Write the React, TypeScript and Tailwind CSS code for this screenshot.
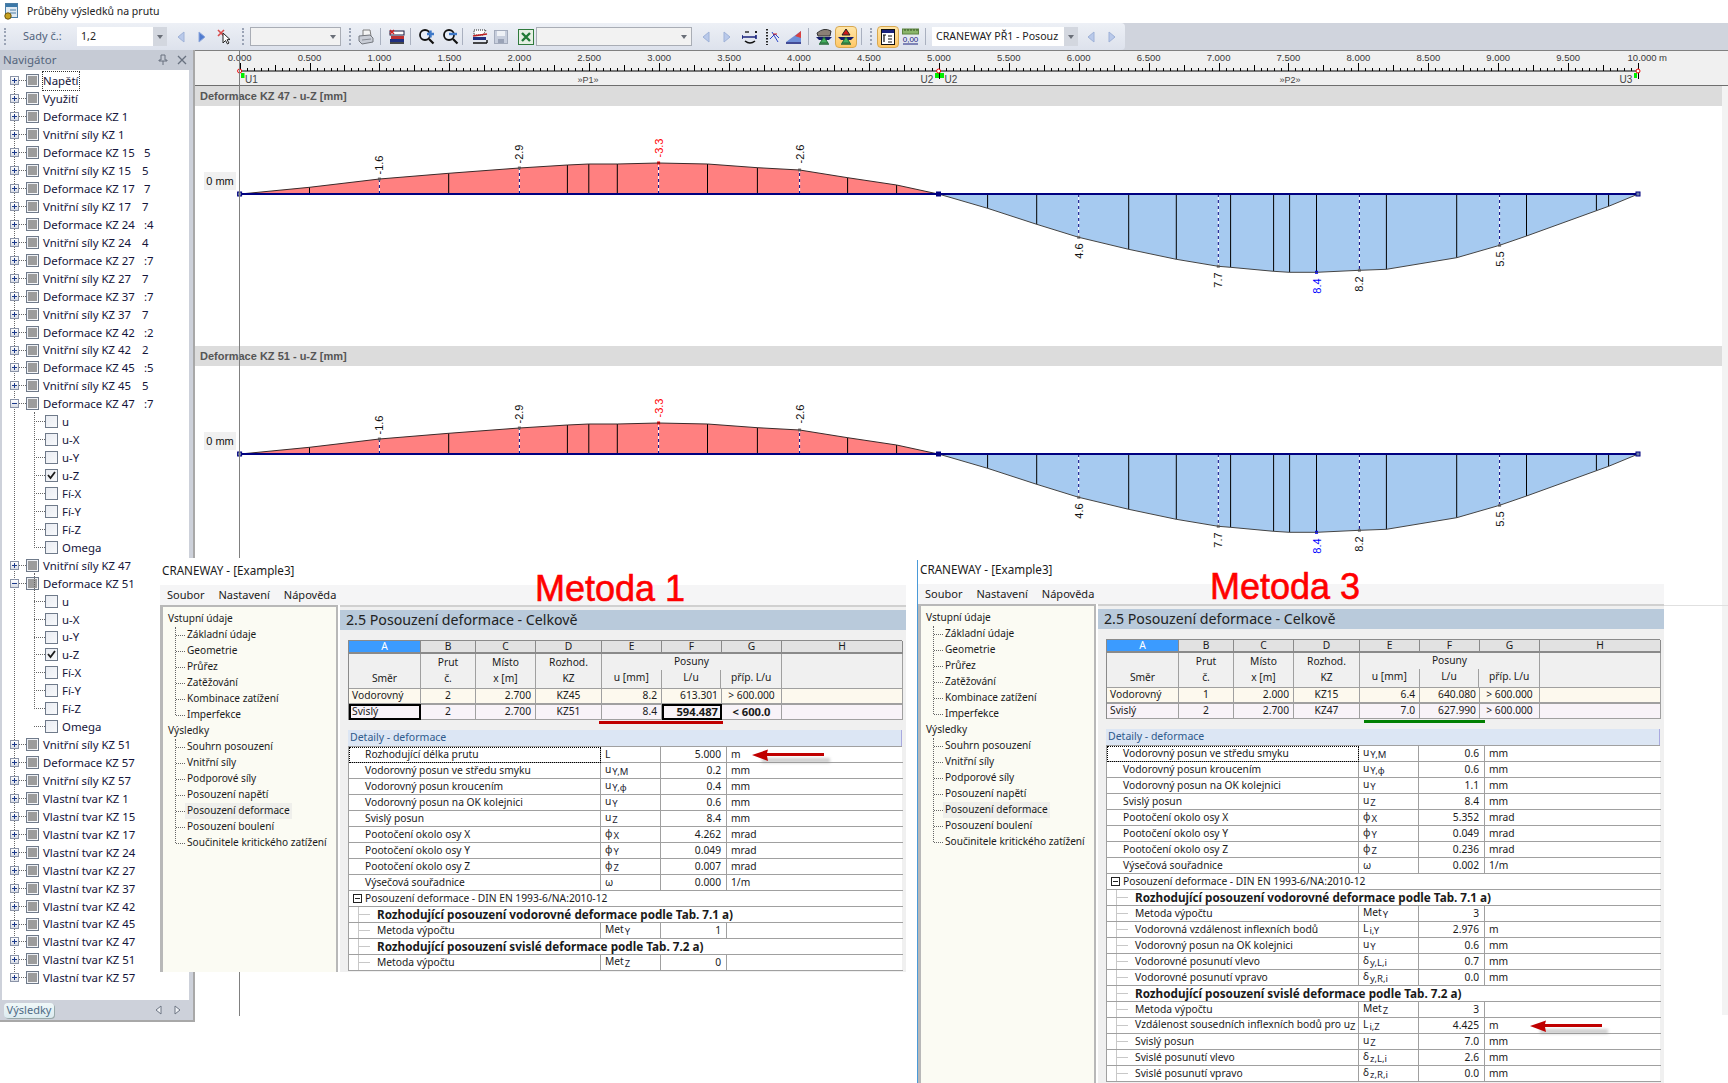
import { ReactNode } from 'react'

type TreeRow = { label: string; tail?: string; open?: boolean; child?: boolean; checked?: boolean; focus?: boolean }
type Detail = { kind: 'row' | 'group' | 'bold' | 'child'; name: string; sym?: string; sub?: string; val?: string; unit?: string }

const defTails = ['', '5', '7', ':4', ':7', ':7', ':2', ':5']
const vsTails = ['', '5', '7', '4', '7', '7', '2', '5']
const kzList = ['1', '15', '17', '24', '27', '37', '42', '45']
const childNames = ['u', 'u-X', 'u-Y', 'u-Z', 'Fí-X', 'Fí-Y', 'Fí-Z', 'Omega']

const children = (): TreeRow[] => childNames.map((n) => ({ label: n, child: true, checked: n === 'u-Z' }))

const treeRows: TreeRow[] = [
  { label: 'Napětí', focus: true },
  { label: 'Využití' },
  ...kzList.flatMap((k, i) => [
    { label: `Deformace KZ ${k}`, tail: defTails[i] },
    { label: `Vnitřní síly KZ ${k}`, tail: vsTails[i] },
  ]),
  { label: 'Deformace KZ 47', tail: ':7', open: true },
  ...children(),
  { label: 'Vnitřní síly KZ 47' },
  { label: 'Deformace KZ 51', open: true },
  ...children(),
  { label: 'Vnitřní síly KZ 51' },
  { label: 'Deformace KZ 57' },
  { label: 'Vnitřní síly KZ 57' },
  ...['1', '15', '17', '24', '27', '37', '42', '45', '47', '51', '57'].map((k) => ({ label: `Vlastní tvar KZ ${k}` })),
]

const details1: Detail[] = [
  { kind: 'row', name: 'Rozhodující délka prutu', sym: 'L', val: '5.000', unit: 'm' },
  { kind: 'row', name: 'Vodorovný posun ve středu smyku', sym: 'u', sub: 'Y,M', val: '0.2', unit: 'mm' },
  { kind: 'row', name: 'Vodorovný posun kroucením', sym: 'u', sub: 'Y,φ', val: '0.4', unit: 'mm' },
  { kind: 'row', name: 'Vodorovný posun na OK kolejnici', sym: 'u', sub: 'Y', val: '0.6', unit: 'mm' },
  { kind: 'row', name: 'Svislý posun', sym: 'u', sub: 'Z', val: '8.4', unit: 'mm' },
  { kind: 'row', name: 'Pootočení okolo osy X', sym: 'φ', sub: 'X', val: '4.262', unit: 'mrad' },
  { kind: 'row', name: 'Pootočení okolo osy Y', sym: 'φ', sub: 'Y', val: '0.049', unit: 'mrad' },
  { kind: 'row', name: 'Pootočení okolo osy Z', sym: 'φ', sub: 'Z', val: '0.007', unit: 'mrad' },
  { kind: 'row', name: 'Výsečová souřadnice', sym: 'ω', val: '0.000', unit: '1/m' },
  { kind: 'group', name: 'Posouzení deformace - DIN EN 1993-6/NA:2010-12' },
  { kind: 'bold', name: 'Rozhodující posouzení vodorovné deformace podle Tab. 7.1 a)' },
  { kind: 'child', name: 'Metoda výpočtu', sym: 'Met', sub: 'Y', val: '1' },
  { kind: 'bold', name: 'Rozhodující posouzení svislé deformace podle Tab. 7.2 a)' },
  { kind: 'child', name: 'Metoda výpočtu', sym: 'Met', sub: 'Z', val: '0' },
]

const details3: Detail[] = [
  { kind: 'row', name: 'Vodorovný posun ve středu smyku', sym: 'u', sub: 'Y,M', val: '0.6', unit: 'mm' },
  { kind: 'row', name: 'Vodorovný posun kroucením', sym: 'u', sub: 'Y,φ', val: '0.6', unit: 'mm' },
  { kind: 'row', name: 'Vodorovný posun na OK kolejnici', sym: 'u', sub: 'Y', val: '1.1', unit: 'mm' },
  { kind: 'row', name: 'Svislý posun', sym: 'u', sub: 'Z', val: '8.4', unit: 'mm' },
  { kind: 'row', name: 'Pootočení okolo osy X', sym: 'φ', sub: 'X', val: '5.352', unit: 'mrad' },
  { kind: 'row', name: 'Pootočení okolo osy Y', sym: 'φ', sub: 'Y', val: '0.049', unit: 'mrad' },
  { kind: 'row', name: 'Pootočení okolo osy Z', sym: 'φ', sub: 'Z', val: '0.236', unit: 'mrad' },
  { kind: 'row', name: 'Výsečová souřadnice', sym: 'ω', val: '0.002', unit: '1/m' },
  { kind: 'group', name: 'Posouzení deformace - DIN EN 1993-6/NA:2010-12' },
  { kind: 'bold', name: 'Rozhodující posouzení vodorovné deformace podle Tab. 7.1 a)' },
  { kind: 'child', name: 'Metoda výpočtu', sym: 'Met', sub: 'Y', val: '3' },
  { kind: 'child', name: 'Vodorovná vzdálenost inflexních bodů', sym: 'L', sub: 'i,Y', val: '2.976', unit: 'm' },
  { kind: 'child', name: 'Vodorovný posun na OK kolejnici', sym: 'u', sub: 'Y', val: '0.6', unit: 'mm' },
  { kind: 'child', name: 'Vodorovné posunutí vlevo', sym: 'δ', sub: 'y,L,i', val: '0.7', unit: 'mm' },
  { kind: 'child', name: 'Vodorovné posunutí vpravo', sym: 'δ', sub: 'y,R,i', val: '0.0', unit: 'mm' },
  { kind: 'bold', name: 'Rozhodující posouzení svislé deformace podle Tab. 7.2 a)' },
  { kind: 'child', name: 'Metoda výpočtu', sym: 'Met', sub: 'Z', val: '3' },
  { kind: 'child', name: 'Vzdálenost sousedních inflexních bodů pro uZ', sym: 'L', sub: 'i,Z', val: '4.425', unit: 'm' },
  { kind: 'child', name: 'Svislý posun', sym: 'u', sub: 'Z', val: '7.0', unit: 'mm' },
  { kind: 'child', name: 'Svislé posunutí vlevo', sym: 'δ', sub: 'z,L,i', val: '2.6', unit: 'mm' },
  { kind: 'child', name: 'Svislé posunutí vpravo', sym: 'δ', sub: 'z,R,i', val: '0.0', unit: 'mm' },
]

const redPts = [[239.6, 194], [251, 193], [309.5, 187.3], [379.4, 179], [448.7, 173.3], [519.4, 168], [567.4, 165], [588.8, 164], [617.3, 164], [658.6, 163], [707.5, 164], [757.4, 167.7], [799.6, 170], [847.6, 177.7], [896.6, 185], [932, 192.7], [938.5, 194]]
const bluePts = [[938.5, 194], [987.6, 208.3], [1036.7, 224.3], [1078.7, 237.3], [1128.7, 249.3], [1176.3, 259.3], [1218.3, 266.3], [1230.6, 267.3], [1273.6, 271.3], [1289.6, 272.3], [1316.5, 272.3], [1359.4, 270.3], [1386.4, 269.3], [1456.7, 257.7], [1499.6, 245.3], [1526.5, 236], [1596.4, 210.7], [1608.6, 206.3], [1638.3, 194]]
const solidX = [309.5, 448.7, 567.4, 588.8, 617.3, 707.5, 757.4, 847.6, 896.6, 987.6, 1036.7, 1128.7, 1176.3, 1230.6, 1273.6, 1289.6, 1316.5, 1386.4, 1456.7, 1526.5, 1596.4, 1608.6]
const dashX = [379.4, 519.4, 658.6, 799.6, 1078.7, 1218.3, 1359.4, 1499.6]
const chartLabels = [
  { x: 379.4, y: 165, t: '-1.6', c: '#111' },
  { x: 519.4, y: 154, t: '-2.9', c: '#111' },
  { x: 658.6, y: 148, t: '-3.3', c: '#ff0000' },
  { x: 799.6, y: 154, t: '-2.6', c: '#111' },
  { x: 1078.7, y: 251, t: '4.6', c: '#111' },
  { x: 1218.3, y: 280, t: '7.7', c: '#111' },
  { x: 1316.5, y: 286, t: '8.4', c: '#0000ff' },
  { x: 1359.4, y: 284, t: '8.2', c: '#111' },
  { x: 1499.6, y: 259, t: '5.5', c: '#111' },
]

const polyPts = (p: number[][]) => p.map((a) => a.join(',')).join(' ')
const yOn = (x: number) => {
  const all = [...redPts, ...bluePts]
  for (let i = 0; i < all.length - 1; i++) {
    if (x >= all[i][0] && x <= all[i + 1][0] && all[i + 1][0] !== all[i][0]) {
      return all[i][1] + ((x - all[i][0]) / (all[i + 1][0] - all[i][0])) * (all[i + 1][1] - all[i][1])
    }
  }
  return 194
}

const Chart = () => (
  <svg viewBox="195 106 1527 240" className="block w-[1527px] h-[240px]" fontFamily="'Liberation Sans', sans-serif">
    <rect x="204" y="172" width="32" height="18" fill="#f0f0f0" />
    <text x="220" y="185" fontSize="11" textAnchor="middle" fill="#111">0 mm</text>
    <polygon points={polyPts(redPts)} fill="#ff8080" />
    <polygon points={polyPts(bluePts)} fill="#a6caf0" />
    {solidX.map((x) => (
      <line key={x} x1={x} x2={x} y1={194} y2={yOn(x)} stroke="#000" strokeWidth="1" />
    ))}
    {dashX.map((x) => (
      <g key={x}>
        <line x1={x} x2={x} y1={194} y2={yOn(x)} stroke="#fff" strokeWidth="1" />
        <line x1={x} x2={x} y1={194} y2={yOn(x)} stroke="#000080" strokeWidth="1" strokeDasharray="3 3" />
        <rect x={x - 1.5} y={yOn(x) - 1.5} width="3" height="3" fill={x === 658.6 ? '#ff0000' : '#808080'} />
      </g>
    ))}
    <rect x="1315" y="270.8" width="3" height="3" fill="#0000ff" />
    <polyline points={polyPts(redPts)} fill="none" stroke="#3a2a2a" strokeWidth="1" />
    <polyline points={polyPts(bluePts)} fill="none" stroke="#444" strokeWidth="1" />
    <line x1="239.6" x2="1638.3" y1="194" y2="194" stroke="#000080" strokeWidth="2" />
    <rect x="237.6" y="192" width="4" height="4" fill="#7080a8" stroke="#000080" />
    <rect x="936" y="191.5" width="5" height="5" fill="#000080" />
    <rect x="1636" y="192" width="4" height="4" fill="#7080a8" stroke="#000080" />
    {chartLabels.map((l) => (
      <text key={l.t} x={l.x + 4} y={l.y} fontSize="11" fill={l.c} textAnchor="middle" transform={`rotate(-90 ${l.x + 4} ${l.y})`}>
        {l.t}
      </text>
    ))}
  </svg>
)

const Ruler = () => {
  const x0 = 239.6
  const step = 6.9925
  const ticks = Array.from({ length: 201 }, (_, i) => i)
  const labels = Array.from({ length: 21 }, (_, i) => i)
  return (
    <svg viewBox="195 50 1533 36" className="block w-[1533px] h-[36px]" fontFamily="'Liberation Sans', sans-serif">
      <rect x="195" y="50" width="1533" height="36" fill="#f0f0f0" />
      <line x1="195" x2="1728" y1="50.5" y2="50.5" stroke="#808080" />
      <line x1="195" x2="1728" y1="85.5" y2="85.5" stroke="#6e6e6e" />
      <line x1={x0} x2={x0 + 200 * step} y1="71" y2="71" stroke="#000" />
      {ticks.map((i) => {
        const x = Math.round(x0 + i * step) + 0.5
        const top = i % 10 === 0 ? 63 : i % 5 === 0 ? 65 : 68
        return <line key={i} x1={x} x2={x} y1={top} y2={71} stroke="#000" />
      })}
      {labels.map((i) => (
        <text key={i} x={x0 + i * 69.925 + (i === 20 ? 4 : 0)} y="61" fontSize="9.5" textAnchor="middle" fill="#3a3a3a">
          {(i * 0.5).toFixed(3)}
        </text>
      ))}
      <text x="1659" y="61" fontSize="9.5" fill="#3a3a3a">m</text>
      <line x1="939.5" x2="939.5" y1="71" y2="79" stroke="#000" />
      <line x1="1638.5" x2="1638.5" y1="71" y2="79" stroke="#000" />
      <line x1="239.5" x2="239.5" y1="71" y2="79" stroke="#000" />
      <rect x="241" y="73" width="3.5" height="5" fill="#00ee00" />
      <rect x="935" y="73" width="4" height="5" fill="#00ee00" />
      <rect x="940" y="73" width="4" height="5" fill="#00ee00" />
      <rect x="1634" y="73" width="3" height="5" fill="#00ee00" />
      <circle cx="239.6" cy="71" r="2" fill="#fff" stroke="#ee0000" />
      <circle cx="938.6" cy="71" r="2" fill="#fff" stroke="#ee0000" />
      <circle cx="1638" cy="71" r="2" fill="#fff" stroke="#ee0000" />
      <g fontSize="10" fill="#444">
        <text x="245" y="83">U1</text>
        <text x="927" y="83" textAnchor="middle">U2</text>
        <text x="951" y="83" textAnchor="middle">U2</text>
        <text x="1626" y="83" textAnchor="middle">U3</text>
      </g>
      <g fontSize="9" fill="#444">
        <text x="588" y="83" textAnchor="middle">»P1»</text>
        <text x="1290" y="83" textAnchor="middle">»P2»</text>
      </g>
    </svg>
  )
}

const Grip = () => <div className="w-[2px] h-[17px] border-l-2 border-dotted border-[#9aa3b5]" />
const Sep = () => <div className="w-px h-[17px] bg-[#a9b0bf]" />

const ArrowIcon = ({ left, strong }: { left?: boolean; strong?: boolean }) => (
  <svg width="16" height="16" viewBox="0 0 16 16">
    <path d={left ? 'M11 3 L5 8 L11 13 Z' : 'M5 3 L11 8 L5 13 Z'} fill={strong ? '#4f7bd0' : '#b9c9ea'} stroke={strong ? '#8fa8dc' : '#9fb2d8'} />
  </svg>
)

const PickIcon = () => (
  <svg width="16" height="16" viewBox="0 0 16 16">
    <path d="M1 1 L7 7 M7 1 L1 7" stroke="#d84a4a" strokeWidth="1.6" />
    <path d="M6 4 L6 14 L8.5 11.5 L10.5 15 L12 14 L10 10.8 L13 10.5 Z" fill="#fff" stroke="#222" />
  </svg>
)

const PrintIcon = () => (
  <svg width="16" height="16" viewBox="0 0 16 16">
    <path d="M5 1 L12 1 L13 7 L5 7 Z" fill="#f4f4f4" stroke="#7c7c7c" />
    <path d="M1 7 L12 6 L15 9 L15 13 L4 15 L1 12 Z" fill="#c9cdd6" stroke="#74787f" />
    <path d="M4 11 L13 10" stroke="#8a8e96" />
  </svg>
)

const ResultsIcon = () => (
  <svg width="16" height="16" viewBox="0 0 16 16">
    <rect x="1" y="2" width="14" height="4" fill="#fff" stroke="#1a1a40" />
    <path d="M1 1 L5 5 M5 1 L1 5" stroke="#d02020" strokeWidth="1.4" />
    <rect x="2" y="7" width="13" height="3" fill="#c03030" />
    <rect x="1" y="10" width="14" height="3" fill="#1f2f80" />
    <path d="M1 14 L15 14" stroke="#111" strokeWidth="1.5" />
  </svg>
)

const ZoomIcon = ({ minus }: { minus?: boolean }) => (
  <svg width="17" height="17" viewBox="0 0 17 17">
    <circle cx="7" cy="7" r="5" fill="#e8eef8" stroke="#111" strokeWidth="1.8" />
    <path d="M11 11 L15.5 15.5" stroke="#111" strokeWidth="2.2" />
    <path d={minus ? 'M7 6 L15 6' : 'M9 6 L16 6 M12.5 2.5 L12.5 9.5'} stroke="#3d78c8" strokeWidth="2.4" />
  </svg>
)

const SmoothIcon = () => (
  <svg width="16" height="16" viewBox="0 0 16 16">
    <path d="M2 1 L14 1 L11 6 L2 6 Z" fill="#fff" stroke="#222" strokeDasharray="1 1" />
    <path d="M1 7 L15 5" stroke="#c02020" strokeWidth="1.6" />
    <rect x="1" y="8" width="13" height="3" fill="#1f2f80" />
    <path d="M1 14 L15 14 M15 11 L15 14" stroke="#111" strokeWidth="1.4" />
  </svg>
)

const SaveIcon = () => (
  <svg width="16" height="16" viewBox="0 0 16 16">
    <rect x="1.5" y="1.5" width="13" height="13" fill="#c7cedd" stroke="#a3abbc" />
    <rect x="4" y="2" width="8" height="5" fill="#eef1f6" />
    <rect x="5" y="10" width="6" height="4" fill="#9aa3b7" />
  </svg>
)

const ExcelIcon = () => (
  <svg width="16" height="16" viewBox="0 0 16 16">
    <rect x="0.5" y="0.5" width="15" height="15" fill="#e6f0e4" stroke="#2f7a3c" />
    <path d="M4 4 L12 12 M12 4 L4 12" stroke="#1f7a35" strokeWidth="2.4" />
  </svg>
)

const ScaleIcon = () => (
  <svg width="16" height="16" viewBox="0 0 16 16">
    <path d="M0 8 L14 8 M0 6 L0 10 M14 6 L14 10" stroke="#1a237e" strokeWidth="1.6" />
    <path d="M13 2 L15 4 M15 2 L13 4" stroke="#222" />
    <path d="M3 12 Q8 16 13 12" stroke="#111" fill="none" strokeWidth="1.6" />
    <path d="M3 3 L7 3" stroke="#222" strokeWidth="1.4" />
  </svg>
)

const CrossIcon = () => (
  <svg width="16" height="16" viewBox="0 0 16 16">
    <path d="M3 0 L3 16" stroke="#222" strokeDasharray="1.5 1.5" strokeWidth="2" />
    <path d="M6 10 L11 5 L15 9 M8 3 L14 13" stroke="#2b45c8" fill="none" />
    <path d="M9 5 L13 5" stroke="#d02020" />
  </svg>
)

const SlopeIcon = () => (
  <svg width="16" height="16" viewBox="0 0 16 16">
    <path d="M0 13 L15 2 L15 13 Z" fill="#6f8fd8" />
    <path d="M9 7 L15 2 L15 9 Z" fill="#d94040" />
    <path d="M0 14 L15 14" stroke="#1a237e" strokeWidth="1.6" />
  </svg>
)

const LoadIcon = ({ dark }: { dark?: boolean }) => (
  <svg width="18" height="18" viewBox="0 0 18 18">
    {dark ? <path d="M9 1 L13 7 L5 7 Z" fill="#d01818" stroke="#222" /> : <path d="M2 5 Q9 -1 16 3 L15 8 L3 8 Z" fill="#8a8076" stroke="#333" />}
    <path d="M1 9 L17 9 L14 12 L4 12 Z" fill="#121a6a" />
    <path d="M9 9 L5 15 L13 15 Z" fill="#45b060" stroke="#1f6a35" />
    <path d="M4 16 L14 16" stroke="#1f6a35" strokeWidth="1.5" />
  </svg>
)

const TableIcon = () => (
  <svg width="16" height="16" viewBox="0 0 16 16">
    <rect x="1.5" y="0.5" width="13" height="15" fill="#fff" stroke="#111" />
    <rect x="2" y="1" width="12" height="3" fill="#1a237e" />
    <path d="M4 6 L4 13 M3 6 L6 6 M8 7 L12 7 M8 10 L12 10 M8 13 L12 13" stroke="#111" strokeWidth="1.2" />
  </svg>
)

const NumIcon = () => (
  <svg width="17" height="17" viewBox="0 0 17 17">
    <rect x="0.5" y="1" width="16" height="5" fill="#8ab56a" stroke="#5c8440" />
    <path d="M3 1 L3 3 M6 1 L6 3 M9 1 L9 3 M12 1 L12 3 M15 1 L15 3" stroke="#33501f" />
    <text x="8.5" y="14" fontSize="8" fontFamily="'Liberation Sans', sans-serif" textAnchor="middle" fill="#1a237e">0,00</text>
    <path d="M1 16 L16 16" stroke="#1a237e" />
  </svg>
)

const Combo = ({ width, children, filled }: { width: string; children?: ReactNode; filled?: boolean }) => (
  <div className={`${width} h-[19px] flex items-center ${filled ? 'bg-white' : 'bg-[#f2f2f2] border border-[#a9adb5]'}`}>
    <div className="flex-1 min-w-0 whitespace-nowrap pl-[4px] text-[10.6px] text-[#222]">{children}</div>
    <div className={`w-[14px] self-stretch flex items-center justify-center ${filled ? 'bg-[#d3d7df]' : ''}`}>
      <div className="border-x-[3px] border-x-transparent border-t-[4px] border-t-[#6a6f78]" />
    </div>
  </div>
)

const Toolbar = () => (
  <div className="h-[27px] flex bg-[#d0d4dd]">
    <div className="h-full flex items-center bg-gradient-to-b from-[#edf0f6] to-[#dde2ec] pr-[5px] rounded-r-sm">
      <div className="ml-[4px]"><Grip /></div>
      <div className="ml-[17px] w-[54px] text-[11px] text-[#52637c]">Sady č.:</div>
      <Combo width="w-[90px]" filled>1,2</Combo>
      <div className="ml-[6px]"><ArrowIcon left /></div>
      <div className="ml-[5px]"><ArrowIcon strong /></div>
      <div className="ml-[7px]"><PickIcon /></div>
      <div className="ml-[9px]"><Grip /></div>
      <div className="ml-[6px]"><Combo width="w-[91px]" /></div>
      <div className="ml-[8px]"><Grip /></div>
      <div className="ml-[7px]"><PrintIcon /></div>
      <div className="ml-[6px]"><Sep /></div>
      <div className="ml-[8px]"><ResultsIcon /></div>
      <div className="ml-[5px]"><Sep /></div>
      <div className="ml-[7px]"><ZoomIcon /></div>
      <div className="ml-[7px]"><ZoomIcon minus /></div>
      <div className="ml-[3px]"><Sep /></div>
      <div className="ml-[9px]"><SmoothIcon /></div>
      <div className="ml-[5px]"><SaveIcon /></div>
      <div className="ml-[9px]"><ExcelIcon /></div>
      <div className="ml-[2px]"><Combo width="w-[156px]" /></div>
      <div className="ml-[6px]"><ArrowIcon left /></div>
      <div className="ml-[5px]"><ArrowIcon /></div>
      <div className="ml-[7px]"><ScaleIcon /></div>
      <div className="ml-[6px]"><CrossIcon /></div>
      <div className="ml-[6px]"><SlopeIcon /></div>
      <div className="ml-[6px]"><Sep /></div>
      <div className="ml-[6px]"><LoadIcon /></div>
      <div className="ml-[2px] w-[22px] h-[22px] flex items-center justify-center rounded-sm border border-[#d8a850] bg-gradient-to-b from-[#ffe6a8] to-[#ffc765]"><LoadIcon dark /></div>
      <div className="ml-[4px]"><Sep /></div>
      <div className="ml-[8px]"><Grip /></div>
      <div className="ml-[5px] w-[22px] h-[22px] flex items-center justify-center rounded-sm border border-[#d8a850] bg-gradient-to-b from-[#ffe6a8] to-[#ffc765]"><TableIcon /></div>
      <div className="ml-[3px]"><NumIcon /></div>
      <div className="ml-[6px]"><Sep /></div>
      <div className="ml-[6px]"><Combo width="w-[146px]" filled>CRANEWAY PŘ1 - Posouz</Combo></div>
      <div className="ml-[5px]"><ArrowIcon left /></div>
      <div className="ml-[5px]"><ArrowIcon /></div>
    </div>
  </div>
)

const Checkbox = ({ checked, mixed }: { checked?: boolean; mixed?: boolean }) => (
  <div className="w-[13px] h-[13px] shrink-0 flex items-center justify-center border border-[#6f7a8a] bg-gradient-to-br from-[#e9ecf2] to-[#f8f9fb]">
    {mixed && <div className="w-[9px] h-[9px] bg-[#9c9c9c]" />}
    {checked && (
      <svg width="11" height="11" viewBox="0 0 11 11">
        <path d="M2 5 L4.5 8 L9 2" fill="none" stroke="#1c1c1c" strokeWidth="1.8" />
      </svg>
    )}
  </div>
)

const Expander = ({ open }: { open?: boolean }) => (
  <div className="w-[9px] h-[9px] shrink-0 relative flex items-center justify-center border border-[#8b94a8] bg-gradient-to-b from-white to-[#d9dde6] z-10">
    <div className="w-[5px] h-px bg-[#1c3a8a]" />
    {!open && <div className="absolute w-px h-[5px] bg-[#1c3a8a]" />}
  </div>
)

const NavRow = ({ row }: { row: TreeRow }) => {
  if (row.child) {
    return (
      <div className="h-[17.94px] flex items-center pl-[32px]">
        <div className="w-[11px] border-t border-dotted border-[#666]" />
        <Checkbox checked={row.checked} />
        <span className="ml-[4px]">{row.label}</span>
      </div>
    )
  }
  const isDeformace = row.label.startsWith('Deformace')
  return (
    <div className="h-[17.94px] flex items-center pl-[8px] whitespace-nowrap">
      <Expander open={row.open} />
      <div className="w-[7px] border-t border-dotted border-[#666]" />
      <Checkbox mixed />
      <span className={`ml-[4px] ${row.focus ? 'outline-1 outline-dotted outline-[#333]' : ''} ${row.tail ? (isDeformace ? 'w-[101px]' : 'w-[99px]') : ''}`}>{row.label}</span>
      {row.tail && <span>{row.tail}</span>}
    </div>
  )
}

const Navigator = () => (
  <div className="w-[195px] h-[972px] flex flex-col bg-[#cdd1da] border-r-2 border-b-2 border-[#a8a8a8]">
    <div className="h-[20px] flex items-center justify-between px-[3px] bg-[#c6cbd5] text-[11.5px] text-[#54657c]">
      <span>Navigátor</span>
      <div className="flex items-center gap-[9px] pr-[3px]">
        <svg width="10" height="12" viewBox="0 0 10 12">
          <path d="M3 1 L7 1 L7 6 L9 6 L9 7 L1 7 L1 6 L3 6 Z M5 7 L5 11" fill="none" stroke="#68717f" />
        </svg>
        <svg width="10" height="10" viewBox="0 0 10 10">
          <path d="M1 1 L9 9 M9 1 L1 9" stroke="#68717f" strokeWidth="1.3" />
        </svg>
      </div>
    </div>
    <div className="relative ml-[2px] w-[187px] h-[930px] bg-white pt-[2px] text-[11.4px] text-[#14143a] font-['Noto_Sans',sans-serif] overflow-hidden">
      <div className="absolute left-[12px] top-[8px] h-[896px] border-l border-dotted border-[#666]" />
      <div className="absolute left-[32px] top-[342px] h-[136px] border-l border-dotted border-[#666]" />
      <div className="absolute left-[32px] top-[503px] h-[136px] border-l border-dotted border-[#666]" />
      {treeRows.map((r, i) => (
        <NavRow key={i} row={r} />
      ))}
    </div>
    <div className="flex-1 flex items-center pl-[4px] pr-[11px]">
      <div className="w-[50px] h-[15px] flex items-center justify-center rounded-sm bg-gradient-to-b from-[#f0f8f8] to-[#dcebf0] text-[11px] text-[#4e6a85] shadow-[1px_1px_0_#9aa]">Výsledky</div>
      <div className="ml-auto flex items-center gap-[8px]">
        <ArrowPlain left />
        <ArrowPlain />
      </div>
    </div>
  </div>
)

const ArrowPlain = ({ left }: { left?: boolean }) => (
  <svg width="10" height="10" viewBox="0 0 10 10">
    <path d={left ? 'M7 1 L2 5 L7 9 Z' : 'M3 1 L8 5 L3 9 Z'} fill="#eef0f4" stroke="#6e7684" />
  </svg>
)

const Section = ({ title }: { title: string }) => (
  <div>
    <div className="h-[20px] flex items-center pl-[5px] bg-[#dcdcdc] text-[11px] font-bold text-[#555] font-['Liberation_Sans',sans-serif]">{title}</div>
    <Chart />
  </div>
)

const leftTree = [
  { head: 'Vstupní údaje', h: 'h-[88px]', items: ['Základní údaje', 'Geometrie', 'Průřez', 'Zatěžování', 'Kombinace zatížení', 'Imperfekce'] },
  { head: 'Výsledky', h: 'h-[104px]', items: ['Souhrn posouzení', 'Vnitřní síly', 'Podporové síly', 'Posouzení napětí', 'Posouzení deformace', 'Posouzení boulení', 'Součinitele kritického zatížení'] },
]

const LeftTree = () => (
  <div className="w-[178px] shrink-0 bg-[#fbfbf3] border-l-[3px] border-t-2 border-r-2 border-[#b8b8b8] pt-[4px] pl-[5px] whitespace-nowrap text-[10.1px]">
    {leftTree.map((g) => (
      <div key={g.head}>
        <div className="h-4 flex items-center">{g.head}</div>
        <div className={`${g.h} mb-2 ml-[7px] border-l border-dotted border-[#666]`}>
          {g.items.map((it) => (
            <div key={it} className="h-4 flex items-center">
              <div className="w-[9px] border-t border-dotted border-[#666]" />
              <span className={`px-[2px] ${it === 'Posouzení deformace' ? 'bg-[#efefeb]' : ''}`}>{it}</span>
            </div>
          ))}
        </div>
      </div>
    ))}
  </div>
)

const Symbol = ({ sym, sub }: { sym?: string; sub?: string }) => (
  <span>
    {sym}
    {sub && <span className="text-[9.5px] align-[-2px] pl-px text-[#223]">{sub}</span>}
  </span>
)

const gridCols = 'grid grid-cols-[72px_55px_60px_66px_60px_60px_60px_121px]'
const headCell = 'border-r border-b-2 border-[#8a8a8a] flex items-center justify-center h-[13px]'
const colCell = 'border-r border-[#a0a0a0] flex flex-col justify-end items-center h-[34px] pb-[2px]'
const dataCell = 'border-r border-b border-[#a0a0a0] h-4 flex items-center'

type ResultRow = { a: string; b: string; c: string; d: string; e: string; f: string; g: string; bg: string }

const ResultTable = ({ rows, marked, barClass }: { rows: ResultRow[]; marked?: boolean; barClass: string }) => (
  <div className="ml-[8px]">
    <div className={`${gridCols} border-l border-t border-[#8a8a8a] w-[554px]`}>
      {['A', 'B', 'C', 'D', 'E', 'F', 'G', 'H'].map((c) => (
        <div key={c} className={`${headCell} ${c === 'A' ? 'bg-[#3b9bff] text-white' : 'bg-[#e2e2e2]'}`}>{c}</div>
      ))}
      <div className={colCell}><span className="h-4 leading-4">Směr</span></div>
      <div className={colCell}><span className="h-4 leading-4">Prut</span><span className="h-4 leading-4">č.</span></div>
      <div className={colCell}><span className="h-4 leading-4">Místo</span><span className="h-4 leading-4">x [m]</span></div>
      <div className={colCell}><span className="h-4 leading-4">Rozhod.</span><span className="h-4 leading-4">KZ</span></div>
      <div className="col-span-3 border-r border-[#a0a0a0] h-[34px] flex flex-col">
        <div className="h-[16px] flex items-center justify-center">Posuny</div>
        <div className="grid grid-cols-3 flex-1">
          <div className="border-r border-[#a0a0a0] flex items-center justify-center pb-[2px]">u [mm]</div>
          <div className="border-r border-[#a0a0a0] flex items-center justify-center pb-[2px]">L/u</div>
          <div className="flex items-center justify-center pb-[2px]">příp. L/u</div>
        </div>
      </div>
      <div className={colCell} />
      {rows.map((r, i) => {
        const strong = marked && i === 1
        return (
          <div key={r.a} className={`${gridCols} col-span-8 ${r.bg}`}>
            <div className={`${dataCell} pl-[3px] border-t ${strong ? 'outline-2 -outline-offset-2 outline-black' : ''}`}>{r.a}</div>
            <div className={`${dataCell} justify-center border-t`}>{r.b}</div>
            <div className={`${dataCell} justify-end pr-[4px] border-t`}>{r.c}</div>
            <div className={`${dataCell} justify-center border-t`}>{r.d}</div>
            <div className={`${dataCell} justify-end pr-[4px] border-t`}>{r.e}</div>
            <div className={`${dataCell} justify-end pr-[3px] border-t ${strong ? 'font-bold text-[11.2px] outline-2 -outline-offset-2 outline-black' : ''}`}>{r.f}</div>
            <div className={`${dataCell} justify-center border-t ${strong ? 'font-bold text-[11.2px]' : ''}`}>{r.g}</div>
            <div className={`${dataCell} border-t`} />
          </div>
        )
      })}
    </div>
    <div className={barClass} />
  </div>
)

const detailCell = 'border-r border-b border-[#a0a0a0] h-4 flex items-center whitespace-nowrap overflow-hidden'

const DetailRow = ({ d, focus }: { d: Detail; focus?: boolean }) => {
  if (d.kind === 'group') {
    return (
      <div className="col-span-4 h-4 border-b border-[#a0a0a0] flex items-center whitespace-nowrap pl-[4px]">
        <div className="w-[9px] h-[9px] border border-[#222] flex items-center justify-center mr-[3px]">
          <div className="w-[5px] h-px bg-[#222]" />
        </div>
        {d.name}
      </div>
    )
  }
  const nested = d.kind !== 'row'
  const connector = nested && (
    <div className="w-[28px] shrink-0 self-stretch flex items-center pl-[9px]">
      <div className="self-stretch border-l border-[#c8c8c8]" />
      <div className="w-[11px] h-px bg-[#c8c8c8]" />
    </div>
  )
  if (d.kind === 'bold') {
    return (
      <div className="col-span-4 h-4 border-b border-[#a0a0a0] flex items-center whitespace-nowrap font-bold text-[11.7px]">
        {connector}
        {d.name}
      </div>
    )
  }
  return (
    <>
      <div className={`${detailCell} ${nested ? '' : 'pl-[16px]'} ${focus ? 'outline-1 -outline-offset-1 outline-dotted outline-black' : ''}`}>
        {connector}
        {d.name.endsWith('pro uZ') ? <span>Vzdálenost sousedních inflexních bodů pro u<span className="text-[9.5px] align-[-2px]">Z</span></span> : d.name}
      </div>
      <div className={`${detailCell} pl-[4px]`}><Symbol sym={d.sym} sub={d.sub} /></div>
      <div className={`${detailCell} justify-end pr-[5px]`}>{d.val}</div>
      <div className="border-b border-[#a0a0a0] h-4 flex items-center pl-[4px]">{d.unit}</div>
    </>
  )
}

const Overlay = ({ posClass, heightClass, rows, details, marked, barClass, label, labelClass }: {
  posClass: string
  heightClass: string
  rows: ResultRow[]
  details: Detail[]
  marked?: boolean
  barClass: string
  label: string
  labelClass: string
}) => (
  <div className={`absolute ${posClass} ${heightClass} flex flex-col bg-white text-[10.25px] text-[#1a1a1a] font-['Noto_Sans',sans-serif]`}>
    <div className="h-[27px] flex items-end pb-[5px] pl-[2px] text-[11.7px] shrink-0">CRANEWAY -  [Example3]</div>
    <div className="h-[20px] w-[746px] flex items-center gap-[14px] pl-[7px] bg-[#f5f5f6] text-[11px] shrink-0">
      <span>Soubor</span>
      <span>Nastavení</span>
      <span>Nápověda</span>
    </div>
    <div className="flex flex-1 min-h-0 w-[746px]">
      <LeftTree />
      <div className="ml-[2px] flex-1 bg-[#f0f0f0] border-t-2 border-[#d0d0d0] pt-[3px]">
        <div className="h-[20px] flex items-center pl-[6px] bg-[#b9cadb] text-[14.2px] text-[#222]">2.5 Posouzení deformace - Celkově</div>
        <div className="h-[10px]" />
        <ResultTable rows={rows} marked={marked} barClass={barClass} />
        <div className="ml-[8px] w-[554px] mt-[6px]">
          <div className="h-4 flex items-center pl-[2px] bg-[#dce6f4] border-r border-[#a9a9e0] text-[#2e5a8c] text-[10.5px]">Detaily - deformace</div>
          <div className="grid grid-cols-[252px_60px_66px_176px] bg-white border-l border-t border-[#a0a0a0]">
            {details.map((d, i) => (
              <DetailRow key={i} d={d} focus={i === 0} />
            ))}
          </div>
        </div>
      </div>
    </div>
    <div className={`absolute ${labelClass} leading-[54px] font-['Liberation_Sans',sans-serif] text-[36px] text-[#ff0000] [-webkit-text-stroke:0.6px_#ff0000] whitespace-nowrap`}>
      {label}
    </div>
  </div>
)

const ArrowMark = ({ posClass }: { posClass: string }) => (
  <svg width="88" height="24" viewBox="0 0 88 24" className={`absolute ${posClass}`}>
    <rect x="14" y="9" width="68" height="5" fill="#8a8a8a" opacity="0.4" className="blur-[1.5px]" />
    <path d="M4 6 L20 0.5 L19 4 L76 4 L76 7 L19 7 L20 12 Z" fill="#c00000" />
  </svg>
)

export default function App() {
  return (
    <div className="relative w-[1728px] h-[1083px] bg-white overflow-hidden font-['Noto_Sans',sans-serif]">
      <div className="h-[23px] flex items-center pl-[4px] gap-[8px] text-[10.5px] text-[#222]">
        <svg width="15" height="17" viewBox="0 0 15 17">
          <rect x="1.5" y="0.5" width="12" height="14" fill="#dfe9f2" stroke="#4c7ea6" />
          <rect x="2" y="1" width="11" height="3" fill="#3b78a8" />
          <path d="M6 7 L12 7 M6 10 L12 10" stroke="#4c7ea6" />
          <circle cx="4" cy="13" r="3.2" fill="#c7a21f" stroke="#6a5410" />
        </svg>
        <span>Průběhy výsledků na prutu</span>
      </div>
      <Toolbar />
      <div className="flex">
        <Navigator />
        <div className="flex-1 flex flex-col min-w-0">
          <Ruler />
          <div className="flex">
            <div className="w-[1527px]">
              <Section title="Deformace KZ 47 - u-Z [mm]" />
              <Section title="Deformace KZ 51 - u-Z [mm]" />
            </div>
            <div className="w-[6px] h-[929px] bg-[#f3f3f3]" />
          </div>
        </div>
      </div>
      <div className="absolute left-[239px] top-[50px] w-px h-[966px] bg-[#808080]" />
      <div className="absolute left-[906px] top-[605px] w-[12px] h-px bg-[#e0e0e0]" />
      <div className="absolute left-[1661px] top-[605px] w-[67px] h-px bg-[#e0e0e0]" />
      <div className="absolute left-[917px] top-[560px] w-[2px] h-[523px] bg-[#4a9ad8]" />
      <Overlay
        posClass="left-[160px] top-[558px] w-[757px]"
        heightClass="h-[414px]"
        marked
        label="Metoda 1"
        labelClass="left-[375px] top-[4px]"
        rows={[
          { a: 'Vodorovný', b: '2', c: '2.700', d: 'KZ45', e: '8.2', f: '613.301', g: '> 600.000', bg: 'bg-[#fdf9ee]' },
          { a: 'Svislý', b: '2', c: '2.700', d: 'KZ51', e: '8.4', f: '594.487', g: '< 600.0', bg: 'bg-[#f8f3f8]' },
        ]}
        details={details1}
        barClass="ml-[251px] w-[124px] h-[3px] mt-px bg-[#c00000]"
      />
      <Overlay
        posClass="left-[919px] top-[557px] w-[742px] -ml-px"
        heightClass="h-[526px]"
        label="Metoda 3"
        labelClass="left-[292px] top-[3px]"
        rows={[
          { a: 'Vodorovný', b: '1', c: '2.000', d: 'KZ15', e: '6.4', f: '640.080', g: '> 600.000', bg: 'bg-[#fdf9ee]' },
          { a: 'Svislý', b: '2', c: '2.700', d: 'KZ47', e: '7.0', f: '627.990', g: '> 600.000', bg: 'bg-[#f8f3f8]' },
        ]}
        details={details3}
        barClass="ml-[258px] w-[121px] h-[3px] mt-px bg-[#008000]"
      />
      <ArrowMark posClass="left-[748px] top-[749px]" />
      <ArrowMark posClass="left-[1526px] top-[1020px]" />
    </div>
  )
}
